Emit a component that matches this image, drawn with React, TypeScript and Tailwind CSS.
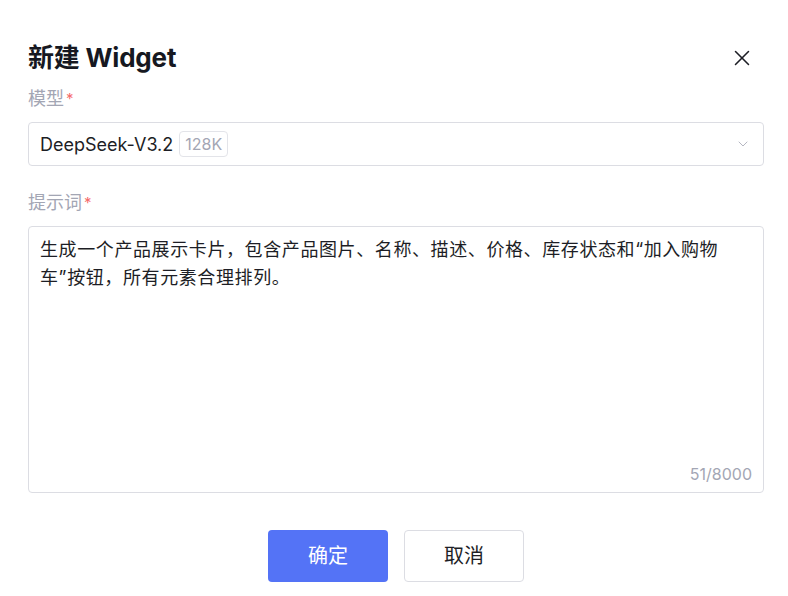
import { X, ChevronDown } from 'lucide-react'

export default function App() {
  const prompt = '生成一个产品展示卡片，包含产品图片、名称、描述、价格、库存状态和“加入购物车”按钮，所有元素合理排列。'

  return (
    <div
      className="h-[596px] w-[788px] bg-white pl-[28px] pr-[24px] pt-[42px] text-[#1d1e25]"
      style={{ fontFamily: 'Inter, "Noto Sans CJK SC", sans-serif' }}
    >
      {/* Header */}
      <div className="flex h-[32px] items-center justify-between">
        <h2 className="text-[26px] font-bold leading-[32px] tracking-[-0.2px] text-[#161821]">新建 Widget</h2>
        <button className="mr-[8px] flex h-7 w-7 items-center justify-center text-[#1d1e25]">
          <X className="h-[26px] w-[26px]" strokeWidth={1.4} />
        </button>
      </div>

      {/* 模型 */}
      <div className="mt-[12px] flex h-[24px] items-center text-[18px] text-[#a3a6b4]">
        模型<span className="ml-[2px] mt-[2px] text-[15px] text-[#f56c6c]">*</span>
      </div>
      <div className="mt-[12px] flex h-[44px] items-center justify-between rounded-[4px] border border-[#dcdde3] pl-[11px] pr-[12px]">
        <div className="flex items-center gap-[6px]">
          <span className="text-[18px] text-[#1d1e25]">DeepSeek-V3.2</span>
          <span className="flex h-[26px] items-center rounded-[4px] border border-[#e3e4e9] px-[5px] text-[16px] text-[#a3a6b4]">
            128K
          </span>
        </div>
        <ChevronDown className="h-4 w-4 text-[#b5b7c2]" strokeWidth={1.5} />
      </div>

      {/* 提示词 */}
      <div className="mt-[24px] flex h-[24px] items-center text-[18px] text-[#a3a6b4]">
        提示词<span className="ml-[2px] mt-[2px] text-[15px] text-[#f56c6c]">*</span>
      </div>
      <div className="relative mt-[12px] h-[267px] rounded-[4px] border border-[#dcdde3] pl-[11px] pr-[32px] pt-[9px]">
        <p className="text-[18px] leading-[28px] tracking-[0.6px] text-[#1d1e25]">{prompt}</p>
        <span className="absolute bottom-[6px] right-[11px] text-[16px] text-[#a3a6b4]">51/8000</span>
      </div>

      {/* Footer */}
      <div className="mt-[37px] flex justify-center gap-[16px]">
        <button className="h-[52px] w-[120px] rounded-[4px] bg-[#5473f6] text-[20px] text-white">确定</button>
        <button className="h-[52px] w-[120px] rounded-[4px] border border-[#dcdde3] bg-white text-[20px] text-[#1d1e25]">
          取消
        </button>
      </div>
    </div>
  )
}
